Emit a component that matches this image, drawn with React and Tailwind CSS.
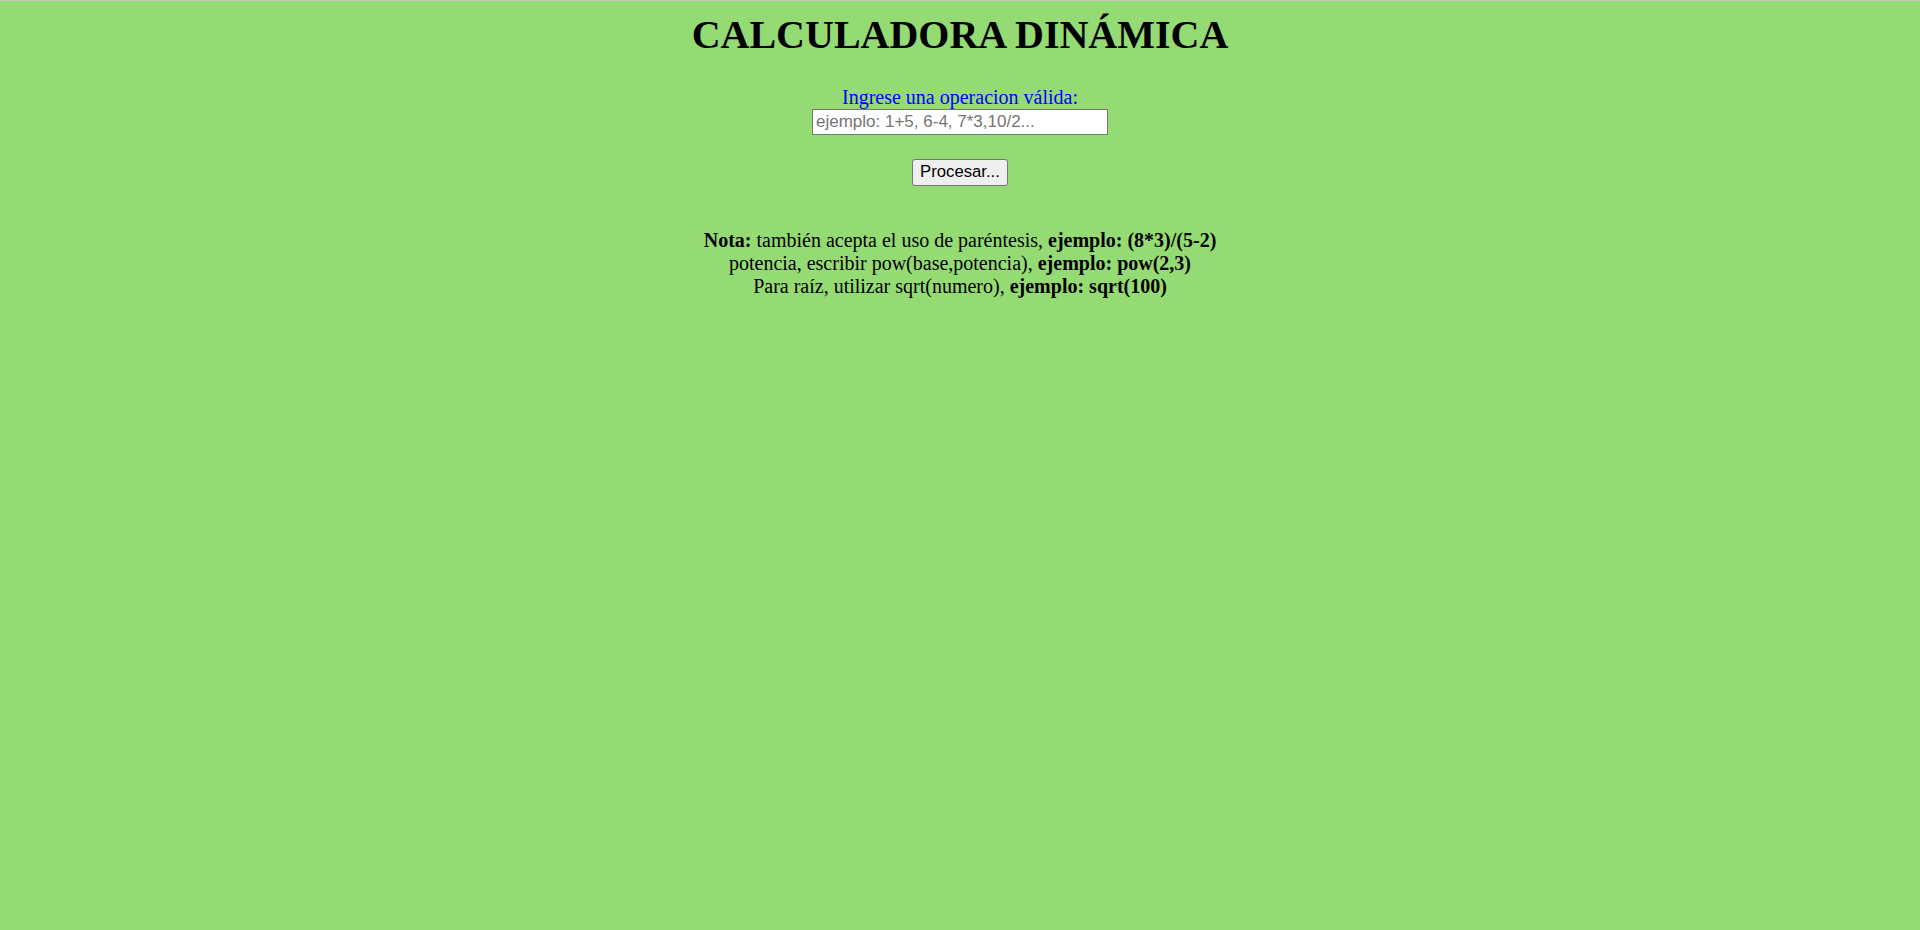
import React from 'react';

const App = () => {
  return (
    <div className="min-h-[930px] bg-[#95db73] border-t border-[#c9c3c3] text-center font-['Liberation_Serif',serif] text-black">
      <h1 className="pt-[11px] text-[40px] leading-[46px] font-bold">CALCULADORA DINÁMICA</h1>

      <div className="mt-[28px] flex flex-col items-center">
        <label className="text-[20px] leading-[23px] text-[#0000ff]">Ingrese una operacion válida:</label>
        <input
          type="text"
          placeholder="ejemplo: 1+5, 6-4, 7*3,10/2..."
          className="w-[296px] h-[26px] px-[3px] bg-white border border-[#767676] font-['Liberation_Sans',sans-serif] text-[17px] placeholder:text-[#757575] outline-none"
        />
        <button className="mt-[24px] h-[27px] px-[7px] bg-[#efefef] border border-[#767676] rounded-[3px] font-['Liberation_Sans',sans-serif] text-[16.7px] leading-none">
          Procesar...
        </button>
      </div>

      <div className="mt-[43px] text-[20px] leading-[23px]">
        <p>
          <b>Nota:</b> también acepta el uso de paréntesis, <b>ejemplo: (8*3)/(5-2)</b>
        </p>
        <p>
          potencia, escribir pow(base,potencia), <b>ejemplo: pow(2,3)</b>
        </p>
        <p>
          Para raíz, utilizar sqrt(numero), <b>ejemplo: sqrt(100)</b>
        </p>
      </div>
    </div>
  );
};

export default App;
